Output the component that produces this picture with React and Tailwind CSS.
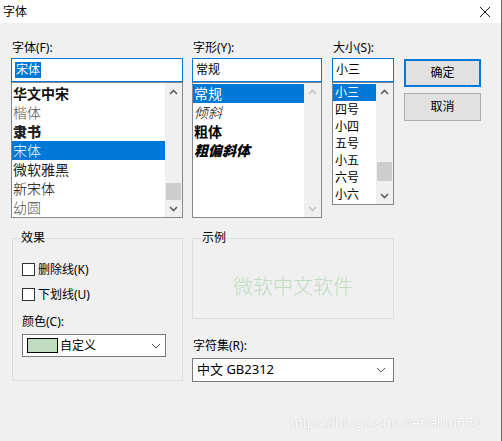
import React from 'react';

const uiFont = { fontFamily: "'Noto Sans', 'Noto Sans CJK SC', sans-serif" };

const fonts = [
  { name: '华文中宋', cls: 'font-bold text-[#111]' },
  { name: '楷体', cls: 'font-light text-[#555]' },
  { name: '隶书', cls: 'font-black text-[#222] text-[13px]' },
  { name: '宋体', cls: 'font-light', selected: true },
  { name: '微软雅黑', cls: 'font-normal text-[#222]' },
  { name: '新宋体', cls: 'font-light' },
  { name: '幼圆', cls: 'font-light text-[#555]' },
];

const styles = [
  { name: '常规', cls: 'font-normal', selected: true },
  { name: '倾斜', cls: 'italic font-light' },
  { name: '粗体', cls: 'font-bold' },
  { name: '粗偏斜体', cls: 'italic font-black' },
];

const sizes = ['小三', '四号', '小四', '五号', '小五', '六号', '小六'];

const Arrow = ({ up, disabled }) => (
  <div className="h-[17px] flex items-center justify-center">
    <svg width="9" height="6" viewBox="0 0 9 6">
      <polyline
        points={up ? '1,5 4.5,1.5 8,5' : '1,1 4.5,4.5 8,1'}
        fill="none"
        stroke={disabled ? '#c3c3c3' : '#606060'}
        strokeWidth="1.6"
      />
    </svg>
  </div>
);

const ScrollBar = ({ thumbTop, thumbH, disabled }) => (
  <div className="w-[17px] h-full bg-[#f0f0f0] flex flex-col">
    <Arrow up disabled={disabled} />
    <div className="flex-1">
      {!disabled && (
        <div className="mx-[1px] bg-[#cdcdcd]" style={{ marginTop: thumbTop, height: thumbH }} />
      )}
    </div>
    <Arrow disabled={disabled} />
  </div>
);

const Chevron = () => (
  <svg width="10" height="6" viewBox="0 0 10 6">
    <polyline points="1,1 5,5 9,1" fill="none" stroke="#555" strokeWidth="1" />
  </svg>
);

const Label = ({ children }) => (
  <div className="h-[20px] leading-[20px] text-[12px] pl-[1px] text-black">{children}</div>
);

const TextBox = ({ children }) => (
  <div className="h-[24px] border border-[#0078d7] bg-white flex items-center pl-[3px] text-[12px]">
    {children}
  </div>
);

export default function App() {
  return (
    <div
      className="w-[502px] h-[441px] bg-[#f0f0f0] relative overflow-hidden border-r border-[#6e6e6e] text-black"
      style={uiFont}
    >
      {/* title bar */}
      <div className="h-[23px] bg-white flex items-center justify-between pl-[3px] pr-[11px]">
        <span className="text-[12px]">字体</span>
        <svg width="10" height="10" viewBox="0 0 10 10">
          <path d="M0 0 L10 10 M10 0 L0 10" stroke="#111" strokeWidth="1" />
        </svg>
      </div>

      <div className="pl-[11px] pt-[15px]">
        {/* top row */}
        <div className="flex items-start">
          <div className="w-[172px]">
            <Label>字体(F):</Label>
            <TextBox>
              <span className="bg-[#0078d7] text-white px-[1px] leading-[16px]">宋体</span>
            </TextBox>
            <div className="h-[136px] border border-[#828790] bg-white flex">
              <div className="flex-1 pt-[1px]">
                {fonts.map((f) => (
                  <div
                    key={f.name}
                    className={`h-[19px] leading-[19px] text-[14px] pl-[1px] ${f.selected ? 'bg-[#0078d7] text-white' : ''} ${f.cls}`}
                  >
                    {f.name}
                  </div>
                ))}
              </div>
              <ScrollBar thumbTop={83} thumbH={17} />
            </div>
          </div>

          <div className="w-[130px] ml-[9px]">
            <Label>字形(Y):</Label>
            <TextBox>常规</TextBox>
            <div className="h-[136px] border border-[#828790] bg-white flex">
              <div className="flex-1 pt-[1px]">
                {styles.map((s) => (
                  <div
                    key={s.name}
                    className={`h-[19px] leading-[19px] text-[14px] pl-[1px] ${s.selected ? 'bg-[#0078d7] text-white' : ''} ${s.cls}`}
                  >
                    {s.name}
                  </div>
                ))}
              </div>
              <ScrollBar disabled />
            </div>
          </div>

          <div className="w-[62px] ml-[10px]">
            <Label>大小(S):</Label>
            <TextBox>小三</TextBox>
            <div className="h-[123px] border border-[#828790] bg-white flex">
              <div className="flex-1 pt-[1px]">
                {sizes.map((s, i) => (
                  <div
                    key={s}
                    className={`h-[17px] leading-[17px] text-[12px] pl-[2px] ${i === 0 ? 'bg-[#0078d7] text-white' : ''}`}
                  >
                    {s}
                  </div>
                ))}
              </div>
              <ScrollBar thumbTop={62} thumbH={19} />
            </div>
          </div>

          <div className="w-[77px] ml-[10px] pt-[21px] flex flex-col gap-[6px]">
            <div className="h-[28px] border-2 border-[#0078d7] bg-[#e1e1e1] flex items-center justify-center text-[12px]">
              确定
            </div>
            <div className="h-[28px] border border-[#adadad] bg-[#e1e1e1] flex items-center justify-center text-[12px]">
              取消
            </div>
          </div>
        </div>

        {/* bottom row */}
        <div className="flex items-start mt-[20px]">
          <div className="ml-[1px] w-[171px] h-[143px] border border-[#dcdcdc] relative">
            <span className="absolute -top-[9px] left-[7px] bg-[#f0f0f0] text-[12px] leading-[16px] px-[1px]">
              效果
            </span>
            <div className="pt-[24px] pl-[9px] flex flex-col">
              <div className="flex items-center h-[13px]">
                <div className="w-[13px] h-[13px] border border-[#333] bg-white" />
                <span className="ml-[3px] text-[12px]">删除线(K)</span>
              </div>
              <div className="flex items-center h-[13px] mt-[12px]">
                <div className="w-[13px] h-[13px] border border-[#333] bg-white" />
                <span className="ml-[3px] text-[12px]">下划线(U)</span>
              </div>
              <div className="h-[16px] leading-[16px] text-[12px] mt-[13px]">颜色(C):</div>
              <div className="mt-[4px] w-[144px] h-[23px] border border-[#7a7a7a] bg-white flex items-center pl-[4px] pr-[4px]">
                <div className="w-[31px] h-[15px] border border-black bg-[#c0dcc0]" />
                <span className="ml-[2px] text-[12px] flex-1">自定义</span>
                <Chevron />
              </div>
            </div>
          </div>

          <div className="ml-[9px] flex flex-col">
            <div className="w-[202px] h-[81px] border border-[#dcdcdc] relative flex items-center justify-center pt-[16px]">
              <span className="absolute -top-[9px] left-[8px] bg-[#f0f0f0] text-[12px] leading-[16px] px-[1px]">
                示例
              </span>
              <span className="text-[20px] font-light text-[#c0dcc0]">微软中文软件</span>
            </div>
            <div className="h-[16px] leading-[16px] text-[12px] mt-[19px] pl-[1px]">字符集(R):</div>
            <div className="mt-[4px] w-[202px] h-[24px] border border-[#7a7a7a] bg-white flex items-center pl-[4px] pr-[7px]">
              <span className="flex-1 text-[13px]">中文 GB2312</span>
              <Chevron />
            </div>
          </div>
        </div>
      </div>

      {/* watermark */}
      <div
        className="absolute left-[290px] top-[412px] text-[15px] text-white whitespace-nowrap"
        style={{ fontFamily: "'Liberation Sans', Arial, sans-serif", textShadow: '0 0 1px rgba(0,0,0,0.3)' }}
      >
        https://blog.csdn.net/alun550
      </div>
    </div>
  );
}
